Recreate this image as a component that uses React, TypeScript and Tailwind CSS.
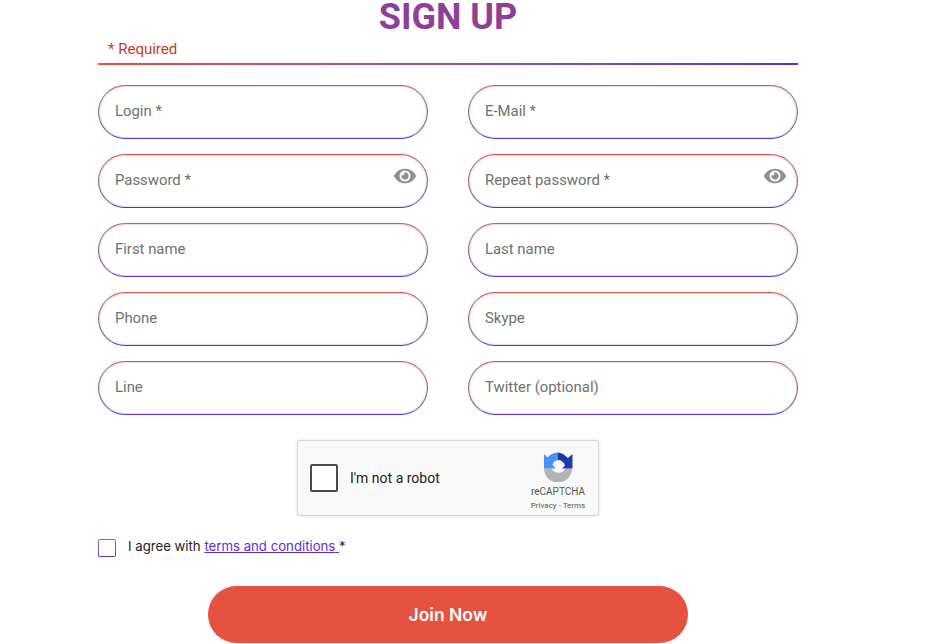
import { FaEye } from 'react-icons/fa';

const fields = [
  { label: 'Login *' },
  { label: 'E-Mail *' },
  { label: 'Password *', secret: true },
  { label: 'Repeat password *', secret: true },
  { label: 'First name' },
  { label: 'Last name' },
  { label: 'Phone' },
  { label: 'Skype' },
  { label: 'Line' },
  { label: 'Twitter (optional)' },
];

function Field({ label, secret }: { label: string; secret?: boolean }) {
  return (
    <div className="relative h-[54px] rounded-full bg-gradient-to-b from-[#e4513f] to-[#5a2fd6] p-px">
      <input
        type={secret ? 'password' : 'text'}
        placeholder={label}
        className="h-full w-full rounded-full bg-white pb-[2px] pl-[16px] pr-10 text-[14.9px] shadow-[inset_0_0_2px_#999] outline-none placeholder:text-[#6f6f6f]"
      />
      {secret && (
        <FaEye className="absolute right-[12px] top-[11px] h-[22px] w-[22px] text-[#8f8f8f]" />
      )}
    </div>
  );
}

function RecaptchaLogo() {
  return (
    <svg viewBox="0 0 30 30" className="h-[30px] w-[30px]">
      <path d="M1 16.5A14 14 0 0 0 29 16.5H22.5A7.5 6.5 0 0 1 8.5 16.5Z" fill="#b4b4b4" />
      <path d="M14.5 0.5A14.5 14.5 0 0 0 4.5 5.5L1 2V16.5H13L9.5 13A7 7 0 0 1 14.5 8Z" fill="#4a90f5" />
      <path d="M14.5 0.5A14.5 14.5 0 0 1 20 2L25 6L29.5 2V16.5H19L22 13.5A8 8 0 0 0 14.5 8Z" fill="#1c3aa9" />
    </svg>
  );
}

export default function App() {
  return (
    <div className="h-[644px] w-[925px] overflow-hidden bg-white pl-[98px] font-['Roboto',sans-serif]">
      <div className="w-[700px]">
        <h1 className="h-[33px] pt-[1px] text-center text-[36px] font-bold leading-[33px] text-[#8f3f97]">
          SIGN UP
        </h1>
        <p className="mt-[7px] pl-[10px] text-[15px] leading-[18px] text-[#c8391f]">* Required</p>
        <div className="mt-[5px] h-[2px] bg-gradient-to-r from-[#e4513f] to-[#5a2fd6]" />

        <div className="mt-[20px] grid grid-cols-2 gap-x-[40px] gap-y-[15px]">
          {fields.map((f) => (
            <Field key={f.label} label={f.label} secret={f.secret} />
          ))}
        </div>

        <div className="mx-auto mt-[25px] flex h-[76px] w-[302px] rounded-[3px] border border-[#d6d6d6] bg-[#f9f9f9] shadow-[0_0_3px_#ddd]">
          <div className="ml-[12px] mt-[23px] h-[28px] w-[28px] rounded-[2px] border-2 border-[#4a4a4a] bg-white" />
          <span className="ml-[12px] mt-[28px] text-[14px] leading-[18px] text-[#222]">I'm not a robot</span>
          <div className="ml-auto mr-[12px] flex w-[56px] flex-col items-center pt-[11px]">
            <RecaptchaLogo />
            <span className="mt-[4px] text-[10px] leading-[12px] text-[#555]">reCAPTCHA</span>
            <span className="mt-[2px] whitespace-nowrap text-[8px] leading-[12px] text-[#555]">Privacy - Terms</span>
          </div>
        </div>

        <div className="mt-[23px] flex items-start">
          <div className="h-[18px] w-[18px] rounded-[2px] bg-gradient-to-b from-[#e4513f] to-[#5a2fd6] p-px">
            <div className="h-full w-full rounded-[1px] bg-white" />
          </div>
          <p className="ml-[12px] font-['Inter',sans-serif] text-[13.2px] leading-[15px] text-[#222]">
            I agree with{' '}
            <a href="#" className="text-[#5a2fd6] underline">
              terms and conditions{' '}
            </a>
            *
          </p>
        </div>

        <button className="mx-auto mt-[29px] block h-[57px] w-[480px] rounded-full bg-[#e55240] pt-[2px] font-['Inter',sans-serif] text-[17.5px] font-semibold text-white">
          Join Now
        </button>
      </div>
    </div>
  );
}
